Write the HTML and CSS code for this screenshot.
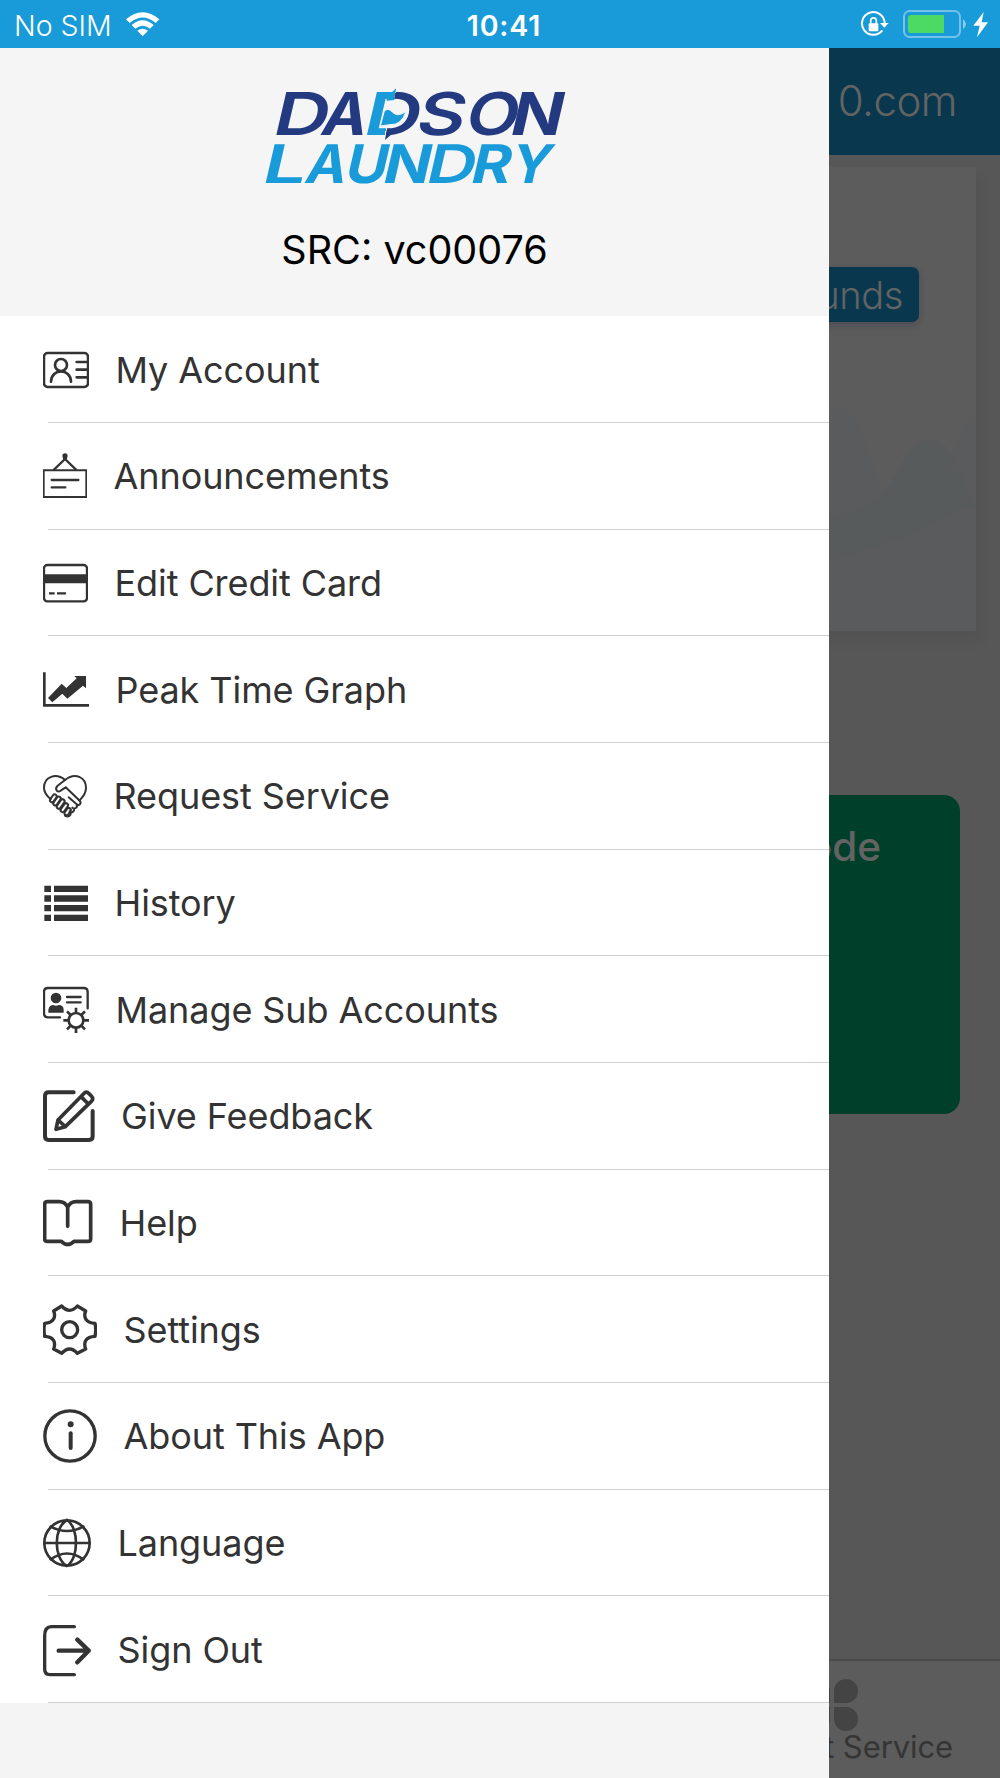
FILE: index.html
```html
<!DOCTYPE html>
<html lang="en">
<head>
<meta charset="utf-8">
<title>Dadson Laundry</title>
<link rel="stylesheet" href="styles.css">
</head>
<body>
<div class="app">
  <header class="status">
    <div class="status-left">
      <span class="carrier">No SIM</span>
      <svg class="wifi" width="36" height="26" viewBox="375 33 108 78">
        <path d="M378 58Q428 16 478 58L467 69Q428 36 389 69Z" fill="#fff"/>
        <path d="M395 75Q428 47 461 75L450 86Q428 68 406 86Z" fill="#fff"/>
        <path d="M412 92Q428 81 444 92L428 109Z" fill="#fff"/>
      </svg>
    </div>
    <span class="clock">10:41</span>
    <svg class="status-right" width="132" height="28" viewBox="1080 30 396 84">
      <path d="M1147 91A34 34 0 1 1 1154 69" fill="none" stroke="#fff" stroke-width="6"/>
      <path d="M1140 69H1166L1153 83Z" fill="#fff"/>
      <rect x="1106" y="70" width="29" height="24" rx="3" fill="#fff"/>
      <path d="M1112 72V62a8.500 8.500 0 0 1 17 0V72" fill="none" stroke="#fff" stroke-width="5"/>
      <rect x="1212" y="33" width="168" height="78" rx="17" fill="none" stroke="#74c2e7" stroke-width="6"/>
      <path d="M1234 45H1332V99H1234a10 10 0 0 1-10-10V55a10 10 0 0 1 10-10Z" fill="#4cd964"/>
      <path d="M1389 58Q1398 64 1398 72T1389 87Z" fill="#8bccec"/>
      <path d="M1451 36L1420 77H1439L1431 112L1464 67H1445Z" fill="#fff"/>
    </svg>
  </header>

  <div class="stage">
    <main class="page">
      <div class="page-title">0.com</div>
      <section class="card">
        <div class="funds">unds</div>
        <svg class="waves" width="146" height="296" viewBox="0 0 438 750" preserveAspectRatio="none">
          <path d="M0 190C120 140 120 470 240 470C330 470 350 270 438 200V750H0Z" fill="#5a5b5d"/>
          <path d="M0 455C230 450 190 265 305 265C370 265 400 390 438 430V440Q370 440 300 480T0 570Z" fill="#575b5b"/>
        </svg>
      </section>
      <section class="code">ode</section>
      <nav class="tabs">
        <svg class="petals" width="38" height="54" viewBox="0 0 38 54">
          <path d="M25 0A12 12 0 0 1 25 24H13V12A12 12 0 0 1 25 0Z"/>
          <path d="M13 28H25A12 12 0 1 1 13 40Z"/>
          <path d="M9 12A12 12 0 0 0 -3 0V24H9ZM9 28H-3V52A12 12 0 0 0 9 40Z"/>
        </svg>
        <span class="tab-label">t Service</span>
      </nav>
    </main>

    <aside class="drawer">
      <div class="brand">
        <svg class="logo" width="340" height="118" viewBox="0 0 1020 354">
          <defs>
            <linearGradient id="split" gradientUnits="userSpaceOnUse" x1="0" x2="100" y1="0" y2="0">
              <stop offset=".52" stop-color="#189bd8"/>
              <stop offset=".52" stop-color="#f5f5f5"/>
              <stop offset=".55" stop-color="#f5f5f5"/>
              <stop offset=".55" stop-color="#233a80"/>
            </linearGradient>
          </defs>
          <g class="word navy" transform="translate(0 196) skewX(-13)">
            <text class="wide" transform="translate(92) scale(1.300 1)">D</text>
            <text transform="translate(237) scale(1.020 1)">A</text>
            <text class="wide" transform="translate(364) scale(1.330 1)" fill="url(#split)">D</text>
            <text class="wide" transform="translate(521) scale(1.260 1)">S</text>
            <text class="wide" transform="translate(668) scale(1.170 1)">O</text>
            <text transform="translate(803) scale(1.160 1)">N</text>
          </g>
          <path d="M440 69L456 67L468 55L463 90L440 92Z" fill="#189bd8"/>
          <path d="M440 180L462 180L456 192L435 210Z" fill="#233a80"/>
          <path d="M433 123Q445 112 458 127Q473 143 498 124Q485 166 450 164L421 168Z" fill="#189bd8" stroke="#f5f5f5" stroke-width="3"/>
          <g class="word sky" transform="translate(0 338) skewX(-13)">
            <text class="wide" transform="translate(60) scale(1.460 1)">L</text>
            <text transform="translate(190) scale(1.020 1)">A</text>
            <text transform="translate(308) scale(1.080 1)">U</text>
            <text transform="translate(422) scale(1.160 1)">N</text>
            <text class="wide" transform="translate(552) scale(1.280 1)">D</text>
            <text transform="translate(686) scale(1.130 1)">R</text>
            <text transform="translate(804) scale(1.030 1)">Y</text>
          </g>
        </svg>
        <div class="src">SRC: vc00076</div>
      </div>

      <ul class="menu">
        <li class="item"><svg width="46" height="60" viewBox="69 58 138 180">
          <rect x="72" y="97" width="132" height="102" rx="11" stroke-width="7.500"/>
          <circle cx="123" cy="133" r="18" stroke-width="8"/>
          <path d="M93 183C94 142 152 142 153 183M170 124H204M170 147H204M170 170H204" stroke-width="8"/>
        </svg><span>My Account</span></li>
        <li class="item"><svg width="44" height="60" viewBox="69 378 132 180">
          <path class="sharp" d="M71 451H199V531H71Z" stroke-width="6"/>
          <path d="M102 449L135 417L168 449M95 480H175M95 502H136" stroke-width="7"/>
          <path class="solid" d="M127 408a8 8 0 0 1 16 0L140 419H130Z"/>
        </svg><span>Announcements</span></li>
        <li class="item"><svg width="45" height="60" viewBox="69 698 135 180">
          <rect x="72" y="734" width="129" height="109" rx="10" stroke-width="7"/>
          <path class="solid" d="M70 762H203V789H70Z"/>
          <path class="sharp" d="M87 819H104M111 819H138" stroke-width="7"/>
        </svg><span>Edit Credit Card</span></li>
        <li class="item"><svg width="46" height="60" viewBox="69 58 138 180">
          <path class="sharp" d="M73 95V194H207" stroke-width="8"/>
          <path class="solid" d="M84 172L125 129L139 142L170 113L163 106H198V143L189 135L142 174L127 159L97 185Z"/>
        </svg><span>Peak Time Graph</span></li>
        <li class="item"><svg width="44" height="60" viewBox="69 378 132 180">
          <g stroke-width="6">
            <path d="M92 477C76 464 72 453 72 443C72 410 108 397 135 420C165 396 198 411 198 445C198 460 189 471 178 482"/>
            <path d="M135 420L112 438C103 449 113 459 122 452L137 442L180 483C185 491 177 499 170 493L146 472M170 493C174 503 163 509 157 503M162 506C164 515 154 520 149 514M152 516C154 528 144 532 135 527"/>
            <rect x="-6" y="-13" width="12" height="26" rx="6" transform="translate(100 475) rotate(35)"/>
            <rect x="-6" y="-15" width="12" height="30" rx="6" transform="translate(111 483) rotate(35)"/>
            <rect x="-6" y="-16" width="12" height="32" rx="6" transform="translate(122 492) rotate(35)"/>
            <rect x="-6" y="-15" width="12" height="30" rx="6" transform="translate(133 503) rotate(35)"/>
            <rect x="-6" y="-12" width="12" height="24" rx="6" transform="translate(143 515) rotate(35)"/>
          </g>
        </svg><span>Request Service</span></li>
        <li class="item"><svg width="45" height="60" viewBox="69 698 135 180">
          <path class="solid" d="M73 736H93V755H73ZM102 736H204V755H102ZM73 765H93V784H73ZM102 765H204V784H102ZM73 794H93V813H73ZM102 794H204V813H102ZM73 823H93V842H73ZM102 823H204V842H102Z"/>
        </svg><span>History</span></li>
        <li class="item"><svg width="46" height="60" viewBox="69 58 138 180">
          <path d="M120 170H84Q72 170 72 158V94Q72 82 84 82H191Q203 82 203 94V143M141 109H182M141 125H182" stroke-width="7"/>
          <circle class="solid" cx="108" cy="112" r="16"/>
          <path class="solid" d="M85 156V148Q87 133 100 133Q108 138 116 133Q131 133 131 148V156Z"/>
          <circle cx="168" cy="179" r="22" stroke-width="8"/>
          <path class="sharp" d="M168 157V141M168 201V217M146 179H130M190 179H207M152 163L141 152M184 163L195 152M152 195L141 206M184 195L195 206" stroke-width="8"/>
        </svg><span>Manage Sub Accounts</span></li>
        <li class="item"><svg width="51.500" height="60" viewBox="69 378 154.500 180">
          <path d="M161 397H86Q75 397 75 408V529Q75 540 86 540H207Q218 540 218 529V453" stroke-width="12"/>
          <path d="M108 508L114 480L191 401Q199 392 207 401L214 408Q222 416 214 424L136 500ZM114 480L136 500M183 410L205 432" stroke-width="11"/>
        </svg><span>Give Feedback</span></li>
        <li class="item"><svg width="50" height="60" viewBox="69 698 150 180">
          <path d="M143 798V740Q134 724 118 724H82Q74 724 74 732V835Q74 843 82 843H124Q143 862 162 843H204Q212 843 212 835V732Q212 724 204 724H168Q152 724 143 740" stroke-width="11"/>
        </svg><span>Help</span></li>
        <li class="item"><svg width="54" height="60" viewBox="69 58 162 180">
          <path d="M125 76Q149 102 172 76L197 91C190 108 196 126 225 128Q229 147 225 167C196 168 190 186 197 205L172 218Q149 192 125 218L101 205C108 186 102 168 74 167Q70 147 74 128C102 126 108 108 101 91Z" stroke-width="10"/>
          <circle cx="149" cy="147" r="24" stroke-width="10"/>
        </svg><span>Settings</span></li>
        <li class="item"><svg width="54" height="60" viewBox="69 378 162 180">
          <circle cx="150" cy="468" r="75.500" stroke-width="10"/>
          <circle class="solid" cx="152" cy="433" r="9"/>
          <path d="M152 460V504" stroke-width="12"/>
        </svg><span>About This App</span></li>
        <li class="item"><svg width="48" height="60" viewBox="69 68 144 180">
          <g stroke-width="8">
            <circle cx="141" cy="158" r="68"/>
            <path d="M72 158H210M92 109Q141 135 190 109M92 207Q141 172 190 207M141 89C100 112 100 204 141 227C177 204 177 112 141 89"/>
          </g>
        </svg><span>Language</span></li>
        <li class="item"><svg width="48" height="60" viewBox="69 388 144 180">
          <path d="M163 408H94Q74 408 74 436V536Q74 552 90 552H163" stroke-width="10"/>
          <path d="M116 480H206M172 447L206 480L172 515" stroke-width="13"/>
        </svg><span>Sign Out</span></li>
      </ul>
    </aside>
  </div>
</div>
</body>
</html>
```
FILE: styles.css
```css
* { box-sizing: border-box; }
body {
  margin: 0;
  font-family: Inter, "Liberation Sans", sans-serif;
}
.app {
  width: 1000px;
  height: 1778px;
  display: flex;
  flex-direction: column;
  overflow: hidden;
}

.status {
  height: 48px;
  flex: none;
  background: #189bd8;
  color: #fff;
  display: grid;
  grid-template-columns: 1fr auto 1fr;
  align-items: center;
  padding: 0 8px 0 14px;
  font-size: 28.500px;
}
.status-left { display: flex; align-items: center; gap: 13px; padding-top: 2px; }
.carrier { font-weight: 300; }
.wifi { margin-top: -2px; }
.clock { font-weight: 600; padding: 2px 0 0 2px; letter-spacing: 0.900px; }
.status-right { justify-self: end; }

.stage { position: relative; flex: 1; }
.page {
  height: 100%;
  display: flex;
  flex-direction: column;
  align-items: flex-end;
  background: #575757;
  color: #636363;
}
.page-title {
  width: 100%;
  height: 107px;
  padding: 30px 43px 0 0;
  background: #09384e;
  text-align: right;
  font-size: 42px;
  font-weight: 300;
  line-height: 46px;
  letter-spacing: -0.500px;
}
.card {
  width: 952px;
  height: 464px;
  margin: 12px 24px 0 0;
  background: #5c5c5c;
  box-shadow: 4px 10px 14px rgba(0, 0, 0, 0.050);
  display: flex;
  flex-direction: column;
  align-items: flex-end;
  justify-content: space-between;
  padding-top: 100px;
}
.funds {
  width: 190px;
  height: 55px;
  margin-right: 57px;
  padding-right: 16px;
  background: #09384e;
  border-radius: 7px;
  box-shadow: 0 3px 6px rgba(40, 40, 80, 0.300);
  text-align: right;
  font-size: 38px;
  font-weight: 300;
  line-height: 56px;
  letter-spacing: -0.400px;
}
.code {
  width: 400px;
  height: 319px;
  margin: 164px 40px 0 0;
  padding: 27px 79px 0 0;
  border-radius: 16px;
  background: #00402b;
  text-align: right;
  font-size: 40.500px;
  font-weight: 500;
  line-height: 50px;
}
.tabs {
  width: 100%;
  flex: none;
  height: 119px;
  margin-top: auto;
  border-top: 2px solid #4a4a4a;
  background: #5c5c5c;
  color: #353535;
  display: flex;
  flex-direction: column;
  align-items: flex-end;
  padding: 18px 47px 0 0;
}
.petals { margin-right: 94px; fill: #444; }
.tab-label { font-size: 31px; line-height: 34px; margin-top: -3px; letter-spacing: -0.100px; }

.drawer {
  position: absolute;
  inset: 0 auto 0 0;
  width: 829px;
  background: #f4f4f4;
}
.brand {
  height: 268.400px;
  display: flex;
  flex-direction: column;
  align-items: center;
  padding-top: 22px;
  background: #f5f5f5;
}
.logo { margin-left: -9px; overflow: visible; }
.word { font-weight: 700; }
.wide { font-weight: 600; }
.navy { font-size: 177px; fill: #233a80; }
.sky { font-size: 160px; fill: #189bd8; }
.src {
  margin-top: 38px;
  font-size: 39.500px;
  line-height: 48px;
  color: #000;
}

.menu { margin: 0; padding: 0; list-style: none; background: #fff; }
.item {
  height: 106.667px;
  padding-left: 43px;
  display: flex;
  align-items: center;
  gap: 26.500px;
  font-size: 36px;
  letter-spacing: -0.080px;
  color: #333;
  background: linear-gradient(#cfcfd1, #cfcfd1) 48px 100% / 100% 1px no-repeat;
}
.item svg {
  flex: none;
  fill: none;
  stroke: #333;
  stroke-linecap: round;
  stroke-linejoin: round;
}
.item svg .sharp { stroke-linecap: butt; stroke-linejoin: miter; }
.item svg .solid { fill: #333; stroke: none; }
```
